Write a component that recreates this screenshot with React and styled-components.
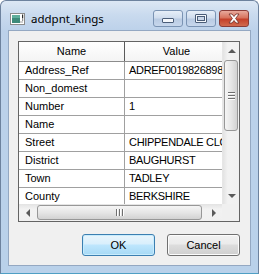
import React from "react";
import styled, { createGlobalStyle, css } from "styled-components";

const GlobalStyle = createGlobalStyle`
  html, body {
    margin: 0;
    padding: 0;
    background: #ffffff;
  }
  * {
    box-sizing: border-box;
  }
`;

const Window = styled.div`
  width: 259px;
  height: 274px;
  display: flex;
  flex-direction: column;
  border: 1px solid #6d829e;
  border-bottom-color: #4f9fc4;
  border-radius: 6px 6px 0 0;
  background: linear-gradient(
    to bottom,
    #dce7f4 0px,
    #c9daee 14px,
    #bcd1ea 30px,
    #b9d1ea 100%
  );
  overflow: hidden;
`;

const TitleBar = styled.div`
  height: 29px;
  display: flex;
  align-items: flex-start;
  padding: 9px 9px 0 9px;
`;

const TitleIcon = styled.svg`
  width: 16px;
  height: 16px;
  margin-top: 1px;
  flex-shrink: 0;
`;

const TitleText = styled.div`
  margin-left: 5px;
  font-family: "Noto Sans", "DejaVu Sans", sans-serif;
  font-size: 11.5px;
  line-height: 17px;
  color: #000000;
  flex: 1;
`;

const Controls = styled.div`
  display: flex;
  gap: 3px;
`;

const CaptionButton = styled.div`
  width: 30px;
  height: 17px;
  border-radius: 3px;
  display: flex;
  align-items: center;
  justify-content: center;
  ${(p) =>
    p.$close
      ? css`
          border: 1px solid #8a3c38;
          background: linear-gradient(
            to bottom,
            #e8a99c 0%,
            #d7735e 45%,
            #c4402a 55%,
            #d16a4f 100%
          );
        `
      : css`
          border: 1px solid #7a93b3;
          background: linear-gradient(
            to bottom,
            #e6eef8 0%,
            #d0ddee 45%,
            #b9cbe3 55%,
            #c7d7ec 100%
          );
        `}
`;

const MinGlyph = styled.div`
  width: 12px;
  height: 5px;
  margin-top: 4px;
  border: 1px solid #4a5d78;
  border-radius: 1px;
  background: #f4f7fb;
`;

const MaxGlyph = styled.div`
  width: 12px;
  height: 9px;
  border: 1px solid #4a5d78;
  border-radius: 1px;
  background: #f4f7fb;
  display: flex;
  align-items: center;
  justify-content: center;
  &::after {
    content: "";
    width: 6px;
    height: 3px;
    border: 1px solid #4a5d78;
    background: #c9d6e8;
  }
`;

const Frame = styled.div`
  flex: 1;
  display: flex;
  padding: 0 7px 7px 7px;
`;

const Client = styled.div`
  flex: 1;
  background: #f0f0f0;
  border: 1px solid #94a8c2;
  display: flex;
  flex-direction: column;
  padding: 10px 10px 0 9px;
`;

const Grid = styled.div`
  width: 222px;
  height: 181px;
  border: 1px solid #646464;
  background: #ffffff;
  display: flex;
  flex-direction: column;
`;

const GridBand = styled.div`
  height: ${(p) => p.$height}px;
  display: flex;
`;

const Table = styled.div`
  flex: 1;
  overflow: hidden;
  display: flex;
  flex-direction: column;
`;

const Row = styled.div`
  display: flex;
  flex-shrink: 0;
  height: ${(p) => (p.$header ? 20 : 18)}px;
  border-bottom: 1px solid ${(p) => (p.$header ? "#8c8c8c" : "#a0a0a0")};
  ${(p) =>
    p.$header &&
    css`
      background: linear-gradient(to bottom, #ffffff 0%, #f4f4f4 100%);
    `}
`;

const Cell = styled.div`
  flex-shrink: 0;
  width: ${(p) => p.$width}px;
  padding: 0 ${(p) => (p.$value ? 4 : 6)}px;
  border-right: 1px solid ${(p) => (p.$header ? "#5a5a5a" : "#a0a0a0")};
  font-family: "Liberation Sans", Arial, sans-serif;
  font-size: 11px;
  letter-spacing: ${(p) => (p.$value && !p.$header ? "-0.3px" : "0")};
  line-height: ${(p) => (p.$header ? 19 : 17)}px;
  color: #000000;
  white-space: nowrap;
  overflow: hidden;
  text-align: ${(p) => (p.$header ? "center" : "left")};
`;

const VScroll = styled.div`
  width: 17px;
  display: flex;
  flex-direction: column;
  background: linear-gradient(to right, #e3e3e3 0%, #f2f2f2 30%, #f0f0f0 100%);
  border-left: 1px solid #e6e6e6;
`;

const HScroll = styled.div`
  flex: 1;
  height: 17px;
  display: flex;
  background: linear-gradient(to bottom, #e3e3e3 0%, #f2f2f2 30%, #f0f0f0 100%);
`;

const ArrowButton = styled.div`
  width: 17px;
  height: 17px;
  flex-shrink: 0;
  display: flex;
  align-items: center;
  justify-content: center;
`;

const Arrow = styled.div`
  width: 0;
  height: 0;
  ${(p) => {
    switch (p.$dir) {
      case "up":
        return css`
          border-left: 4px solid transparent;
          border-right: 4px solid transparent;
          border-bottom: 4px solid #5a5a5a;
        `;
      case "down":
        return css`
          border-left: 4px solid transparent;
          border-right: 4px solid transparent;
          border-top: 4px solid #5a5a5a;
        `;
      case "left":
        return css`
          border-top: 4px solid transparent;
          border-bottom: 4px solid transparent;
          border-right: 4px solid #5a5a5a;
        `;
      default:
        return css`
          border-top: 4px solid transparent;
          border-bottom: 4px solid transparent;
          border-left: 4px solid #5a5a5a;
        `;
    }
  }}
`;

const Track = styled.div`
  flex: 1;
  display: flex;
  flex-direction: ${(p) => (p.$vertical ? "column" : "row")};
`;

const Thumb = styled.div`
  display: flex;
  align-items: center;
  justify-content: center;
  border: 1px solid #979797;
  border-radius: 3px;
  ${(p) =>
    p.$vertical
      ? css`
          height: ${p.$size}px;
          margin: 1px 1px 0 1px;
          background: linear-gradient(
            to right,
            #f5f5f5 0%,
            #e6e6e6 50%,
            #d2d2d2 100%
          );
          flex-direction: column;
          gap: 1px;
        `
      : css`
          width: ${p.$size}px;
          margin: 1px 0 1px 1px;
          background: linear-gradient(
            to bottom,
            #f5f5f5 0%,
            #e6e6e6 50%,
            #d2d2d2 100%
          );
          flex-direction: row;
          gap: 1px;
        `}
`;

const Grip = styled.div`
  background: #6f6f6f;
  box-shadow: ${(p) => (p.$vertical ? "0 1px 0 #ffffff" : "1px 0 0 #ffffff")};
  ${(p) =>
    p.$vertical
      ? css`
          width: 7px;
          height: 1px;
          margin-bottom: 1px;
        `
      : css`
          width: 1px;
          height: 7px;
          margin-right: 1px;
        `}
`;

const Corner = styled.div`
  width: 17px;
  height: 17px;
  background: #f0f0f0;
`;

const ButtonRow = styled.div`
  display: flex;
  justify-content: flex-end;
  gap: 12px;
  margin-top: 12px;
  width: 222px;
`;

const Button = styled.div`
  width: 73px;
  height: 22px;
  border-radius: 3px;
  display: flex;
  align-items: center;
  justify-content: center;
  font-family: "Liberation Sans", Arial, sans-serif;
  font-size: 11px;
  color: #000000;
  ${(p) =>
    p.$default
      ? css`
          border: 1px solid #3c7fb1;
          background: linear-gradient(
            to bottom,
            #e9f5fc 0%,
            #d9effc 45%,
            #bee6fd 50%,
            #a7d9f5 100%
          );
          box-shadow: inset 0 0 0 1px #c8ecfd;
        `
      : css`
          border: 1px solid #707070;
          background: linear-gradient(
            to bottom,
            #f2f2f2 0%,
            #ebebeb 45%,
            #dddddd 50%,
            #cfcfcf 100%
          );
          box-shadow: inset 0 0 0 1px #fcfcfc;
        `}
`;

const rows = [
  ["Address_Ref", "ADREF0019826898"],
  ["Non_domest", ""],
  ["Number", "1"],
  ["Name", ""],
  ["Street", "CHIPPENDALE CLOSE"],
  ["District", "BAUGHURST"],
  ["Town", "TADLEY"],
  ["County", "BERKSHIRE"],
];

function AppIcon() {
  return (
    <TitleIcon viewBox="0 0 16 16">
      <rect x="0.5" y="2.5" width="14" height="11" fill="#ffffff" stroke="#8a8a8a" />
      <rect x="2" y="4" width="8" height="8" fill="#3d8a7a" />
      <rect x="2" y="4" width="8" height="3" fill="#5fae9c" />
      <rect x="10" y="10" width="3" height="2" fill="#d0d0d0" />
      <rect x="12" y="3.5" width="1.2" height="4" fill="#2b2b2b" />
      <rect x="12" y="8.5" width="1.2" height="1" fill="#2b2b2b" />
    </TitleIcon>
  );
}

function CloseGlyph() {
  return (
    <svg width="14" height="11" viewBox="0 0 14 11">
      <path
        d="M2 1 L5 1 L7 3.5 L9 1 L12 1 L8.6 5.5 L12 10 L9 10 L7 7.5 L5 10 L2 10 L5.4 5.5 Z"
        fill="#ffffff"
        stroke="#6e2b24"
        strokeWidth="0.8"
        strokeLinejoin="round"
      />
    </svg>
  );
}

export default function App() {
  return (
    <>
      <GlobalStyle />
      <Window>
        <TitleBar>
          <AppIcon />
          <TitleText>addpnt_kings</TitleText>
          <Controls>
            <CaptionButton>
              <MinGlyph />
            </CaptionButton>
            <CaptionButton>
              <MaxGlyph />
            </CaptionButton>
            <CaptionButton $close>
              <CloseGlyph />
            </CaptionButton>
          </Controls>
        </TitleBar>
        <Frame>
          <Client>
            <Grid>
              <GridBand $height={162}>
                <Table>
                  <Row $header>
                    <Cell $header $width={106}>
                      Name
                    </Cell>
                    <Cell $header $value $width={104}>
                      Value
                    </Cell>
                  </Row>
                  {rows.map(([name, value]) => (
                    <Row key={name}>
                      <Cell $width={106}>{name}</Cell>
                      <Cell $value $width={104}>
                        {value}
                      </Cell>
                    </Row>
                  ))}
                </Table>
                <VScroll>
                  <ArrowButton>
                    <Arrow $dir="up" />
                  </ArrowButton>
                  <Track $vertical>
                    <Thumb $vertical $size={71}>
                      <Grip $vertical />
                      <Grip $vertical />
                      <Grip $vertical />
                    </Thumb>
                  </Track>
                  <ArrowButton>
                    <Arrow $dir="down" />
                  </ArrowButton>
                </VScroll>
              </GridBand>
              <GridBand $height={17}>
                <HScroll>
                  <ArrowButton>
                    <Arrow $dir="left" />
                  </ArrowButton>
                  <Track>
                    <Thumb $size={165}>
                      <Grip />
                      <Grip />
                      <Grip />
                    </Thumb>
                  </Track>
                  <ArrowButton>
                    <Arrow $dir="right" />
                  </ArrowButton>
                </HScroll>
                <Corner />
              </GridBand>
            </Grid>
            <ButtonRow>
              <Button $default>OK</Button>
              <Button>Cancel</Button>
            </ButtonRow>
          </Client>
        </Frame>
      </Window>
    </>
  );
}
